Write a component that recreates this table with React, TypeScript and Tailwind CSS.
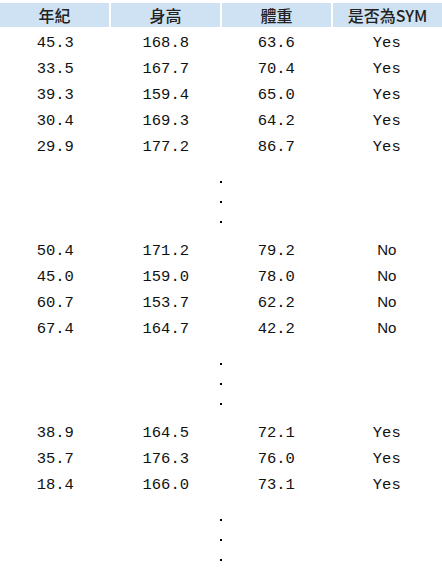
const rows1 = [
  ["45.3", "168.8", "63.6", "Yes"],
  ["33.5", "167.7", "70.4", "Yes"],
  ["39.3", "159.4", "65.0", "Yes"],
  ["30.4", "169.3", "64.2", "Yes"],
  ["29.9", "177.2", "86.7", "Yes"],
];
const rows2 = [
  ["50.4", "171.2", "79.2", "No"],
  ["45.0", "159.0", "78.0", "No"],
  ["60.7", "153.7", "62.2", "No"],
  ["67.4", "164.7", "42.2", "No"],
];
const rows3 = [
  ["38.9", "164.5", "72.1", "Yes"],
  ["35.7", "176.3", "76.0", "Yes"],
  ["18.4", "166.0", "73.1", "Yes"],
];

function Rows({ rows }: { rows: string[][] }) {
  return (
    <>
      {rows.map((r, i) => (
        <div key={i} className="grid grid-cols-4 h-[26px] items-center">
          {r.map((c, j) => (
            <div
              key={j}
              className={
                c === "No"
                  ? "text-center font-['Liberation_Sans',sans-serif] text-[15px] leading-[18px] -mt-[2px]"
                  : "text-center leading-[18px]"
              }
            >
              {c}
            </div>
          ))}
        </div>
      ))}
    </>
  );
}

function Dots() {
  return (
    <div className="h-[78px] flex flex-col items-center pt-[21px] gap-[18px]">
      <div className="w-[2px] h-[2px] bg-black" />
      <div className="w-[2px] h-[2px] bg-black" />
      <div className="w-[2px] h-[2px] bg-black" />
    </div>
  );
}

export default function App() {
  return (
    <div className="w-[442px] h-[570px] bg-white overflow-hidden text-[#111] font-['Liberation_Mono',monospace] text-[15.5px]">
      <div className="mt-[3px] grid grid-cols-4 gap-[2px] h-[24px] font-['Noto_Sans_CJK_TC','Noto_Sans',sans-serif] text-[16px] font-medium text-[#222]">
        {["年紀", "身高", "體重", "是否為SYM"].map((h) => (
          <div key={h} className="bg-[#cfe2f3] flex items-center justify-center">
            {h}
          </div>
        ))}
      </div>
      <div className="pt-[3px]">
        <Rows rows={rows1} />
        <Dots />
        <Rows rows={rows2} />
        <Dots />
        <Rows rows={rows3} />
        <Dots />
      </div>
    </div>
  );
}
